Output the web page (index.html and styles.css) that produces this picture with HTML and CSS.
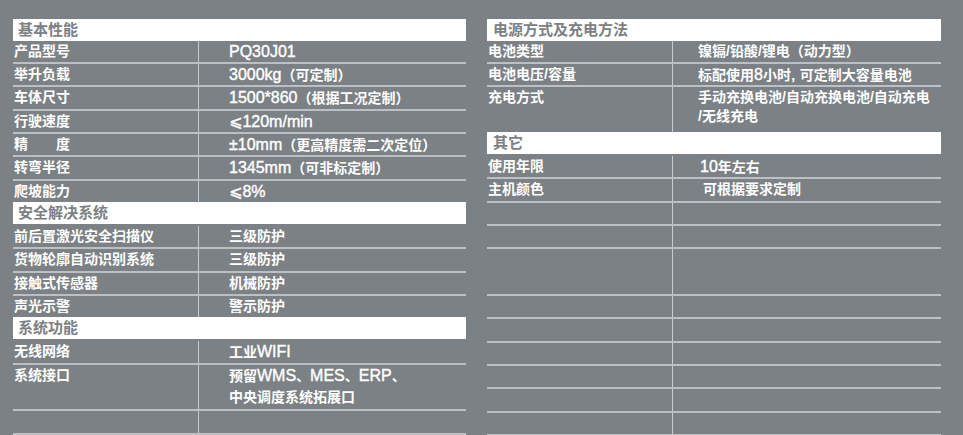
FILE: index.html
```html
<!DOCTYPE html>
<html lang="zh-CN">
<head>
<meta charset="utf-8">
<title>产品参数</title>
<link rel="stylesheet" href="styles.css">
</head>
<body>
<div class="page">
  <section class="panel panel-left">
    <div class="head">基本性能</div>
    <div class="row short"><div class="k">产品型号</div><div class="v"><span class="en">PQ30J01</span></div></div>
    <div class="row"><div class="k">举升负载</div><div class="v"><span class="en">3000kg</span>（可定制）</div></div>
    <div class="row"><div class="k">车体尺寸</div><div class="v"><span class="en">1500*860</span>（根据工况定制）</div></div>
    <div class="row"><div class="k">行驶速度</div><div class="v"><span class="en">⩽120m/min</span></div></div>
    <div class="row"><div class="k">精　　度</div><div class="v"><span class="en">±10mm</span>（更高精度需二次定位）</div></div>
    <div class="row"><div class="k">转弯半径</div><div class="v"><span class="en">1345mm</span>（可非标定制）</div></div>
    <div class="row"><div class="k">爬坡能力</div><div class="v"><span class="en">⩽8%</span></div></div>
    <div class="head">安全解决系统</div>
    <div class="row first"><div class="k">前后置激光安全扫描仪</div><div class="v">三级防护</div></div>
    <div class="row"><div class="k">货物轮廓自动识别系统</div><div class="v">三级防护</div></div>
    <div class="row"><div class="k">接触式传感器</div><div class="v">机械防护</div></div>
    <div class="row"><div class="k">声光示警</div><div class="v">警示防护</div></div>
    <div class="head">系统功能</div>
    <div class="row first"><div class="k">无线网络</div><div class="v">工业<span class="en">WIFI</span></div></div>
    <div class="row double"><div class="k">系统接口</div><div class="v">预留<span class="en">WMS</span>、<span class="en">MES</span>、<span class="en">ERP</span>、<br>中央调度系统拓展口</div></div>
    <div class="row"><div class="k"></div><div class="v"></div></div>
    <div class="row"><div class="k"></div><div class="v"></div></div>
  </section>

  <section class="panel panel-right">
    <div class="head">电源方式及充电方法</div>
    <div class="row short"><div class="k">电池类型</div><div class="v">镍镉<span class="sl">/</span>铅酸<span class="sl">/</span>锂电（动力型）</div></div>
    <div class="row"><div class="k">电池电压<span class="sl">/</span>容量</div><div class="v">标配使用<span class="en">8</span>小时<span class="en">, </span>可定制大容量电池</div></div>
    <div class="row double"><div class="k">充电方式</div><div class="v tight">手动充换电池<span class="sl">/</span>自动充换电池<span class="sl">/</span>自动充电<br><span class="sl">/</span>无线充电</div></div>
    <div class="head">其它</div>
    <div class="row first"><div class="k">使用年限</div><div class="v nudge"><span class="en">10</span>年左右</div></div>
    <div class="row"><div class="k">主机颜色</div><div class="v nudge2">可根据要求定制</div></div>
    <div class="row"><div class="k"></div><div class="v"></div></div>
    <div class="row"><div class="k"></div><div class="v"></div></div>
    <div class="row double"><div class="k"></div><div class="v"></div></div>
    <div class="row"><div class="k"></div><div class="v"></div></div>
    <div class="row"><div class="k"></div><div class="v"></div></div>
    <div class="row"><div class="k"></div><div class="v"></div></div>
    <div class="row"><div class="k"></div><div class="v"></div></div>
    <div class="row"><div class="k"></div><div class="v"></div></div>
    <div class="row"><div class="k"></div><div class="v"></div></div>
    <div class="row"><div class="k"></div><div class="v"></div></div>
  </section>
</div>
</body>
</html>
```

FILE: styles.css
```css
html, body {
  margin: 0;
  padding: 0;
  background: #7b8184;
}

body {
  width: 963px;
  height: 435px;
  overflow: hidden;
  font-family: "Liberation Sans", "Noto Sans CJK SC", sans-serif;
}

.page {
  display: flex;
  gap: 21px;
  padding: 19px 0 0 13px;
  height: 435px;
  box-sizing: border-box;
  overflow: hidden;
}

.panel {
  display: flex;
  flex-direction: column;
  flex: none;
}

.panel-left { width: 453px; }
.panel-right { width: 454px; }

.head {
  height: 22px;
  line-height: 22px;
  background: #ffffff;
  color: #7b8083;
  font-size: 15px;
  font-weight: 700;
  padding-left: 5px;
  box-sizing: border-box;
  flex: none;
}

.panel-right .head { padding-left: 6px; }

.row {
  display: grid;
  grid-template-columns: 186px 1fr;
  height: 23.33px;
  border-top: 2px solid #bcc0c2;
  box-sizing: border-box;
  color: #ffffff;
  font-size: 14px;
  font-weight: 700;
  line-height: 21.33px;
  flex: none;
}

.row.first {
  border-top: none;
  height: 23.33px;
  padding-top: 2px;
}

.row.short {
  border-top: none;
  height: 21px;
  line-height: 21px;
}

.row.double {
  height: 46.67px;
}

.k {
  border-right: 1px solid #c9cccd;
  padding-left: 1px;
  white-space: nowrap;
}

.v {
  white-space: nowrap;
}

.panel-left .v { padding-left: 30px; }
.panel-right .v { padding-left: 25px; }
.panel-right .v.nudge { padding-left: 27px; }
.panel-right .v.nudge2 { padding-left: 30px; }

.v.tight {
  line-height: 19px;
  padding-top: 1px;
}

.en {
  font-family: "Liberation Sans", "DejaVu Sans", sans-serif;
  font-size: 16px;
  font-weight: 400;
  -webkit-text-stroke: 0.4px #ffffff;
}

.sl {
  font-family: "Liberation Sans", sans-serif;
  font-weight: 700;
  font-size: 14px;
}
```
